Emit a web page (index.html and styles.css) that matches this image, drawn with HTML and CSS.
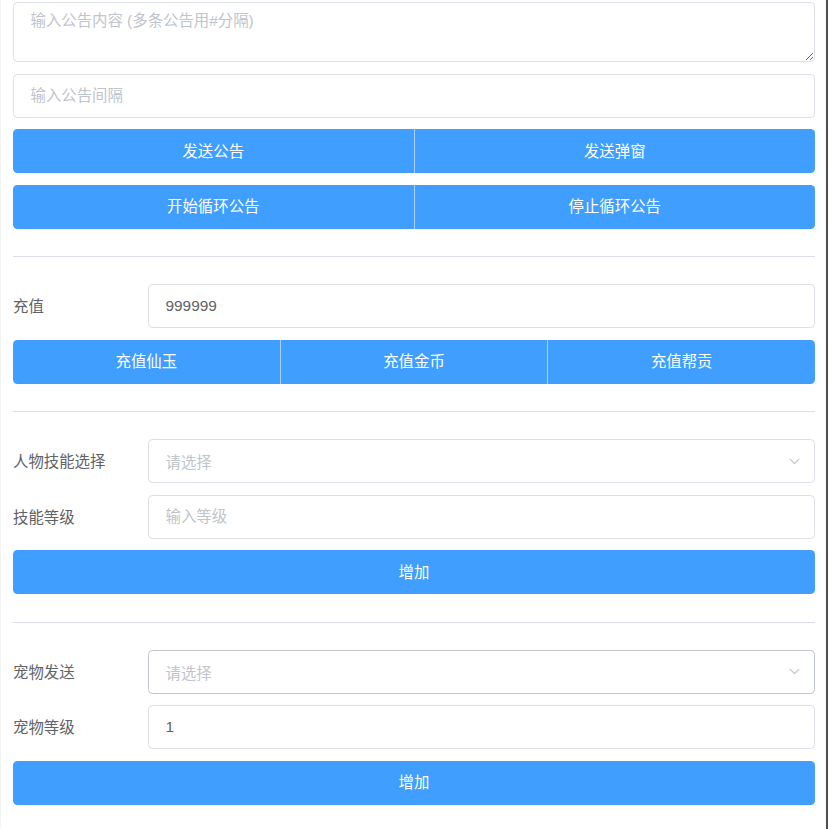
FILE: index.html
```html
<!DOCTYPE html>
<html lang="zh-CN">
<head>
<meta charset="utf-8">
<title>管理面板</title>
<link rel="stylesheet" href="styles.css">
</head>
<body>
<div class="page">
  <div class="section">
    <textarea class="textarea" placeholder="输入公告内容 (多条公告用#分隔)"></textarea>
    <input class="input" type="text" placeholder="输入公告间隔">
    <div class="btn-group">
      <button class="btn">发送公告</button>
      <button class="btn">发送弹窗</button>
    </div>
    <div class="btn-group">
      <button class="btn">开始循环公告</button>
      <button class="btn">停止循环公告</button>
    </div>
  </div>
  <hr class="divider">
  <div class="section">
    <div class="form-row">
      <label class="label">充值</label>
      <input class="input" type="text" value="999999">
    </div>
    <div class="btn-group">
      <button class="btn">充值仙玉</button>
      <button class="btn">充值金币</button>
      <button class="btn">充值帮贡</button>
    </div>
  </div>
  <hr class="divider">
  <div class="section">
    <div class="form-row">
      <label class="label">人物技能选择</label>
      <div class="select">
        <span class="select-placeholder">请选择</span>
        <svg class="chevron" width="11" height="7" viewBox="0 0 11 7"><path d="M0.8 0.8 L5.5 5.6 L10.2 0.8" fill="none" stroke="#C0C4CC" stroke-width="1.2"/></svg>
      </div>
    </div>
    <div class="form-row">
      <label class="label">技能等级</label>
      <input class="input" type="text" placeholder="输入等级">
    </div>
    <button class="btn btn-block">增加</button>
  </div>
  <hr class="divider">
  <div class="section">
    <div class="form-row">
      <label class="label">宠物发送</label>
      <div class="select select-hover">
        <span class="select-placeholder">请选择</span>
        <svg class="chevron" width="11" height="7" viewBox="0 0 11 7"><path d="M0.8 0.8 L5.5 5.6 L10.2 0.8" fill="none" stroke="#C0C4CC" stroke-width="1.2"/></svg>
      </div>
    </div>
    <div class="form-row">
      <label class="label">宠物等级</label>
      <input class="input" type="text" value="1">
    </div>
    <button class="btn btn-block">增加</button>
  </div>
</div>
</body>
</html>
```

FILE: styles.css
```css
* {
  box-sizing: border-box;
}

html, body {
  margin: 0;
  padding: 0;
  background: #ffffff;
}

body {
  font-family: "Liberation Sans", "Noto Sans CJK SC", sans-serif;
  font-size: 15.4px;
  color: #606266;
}

.page {
  width: 828px;
  min-height: 100vh;
  padding: 2px 11px 20px 12px;
  border-right: 2px solid #4d4d4d;
  border-left: 1px solid #f3f3f3;
}

.section {
  display: flex;
  flex-direction: column;
  gap: 11.5px;
}

.divider {
  border: 0;
  border-top: 1px solid #DCDFE6;
  margin: 27.5px 0 27px 0;
  height: 0;
}

.textarea {
  display: block;
  width: 100%;
  height: 60px;
  padding: 5.5px 16.5px;
  border: 1px solid #DCDFE6;
  border-radius: 4.4px;
  font-family: inherit;
  font-size: 15.4px;
  line-height: 1.5;
  color: #606266;
  resize: vertical;
  outline: none;
}

.input {
  display: block;
  width: 100%;
  height: 44px;
  padding: 0 16.5px;
  border: 1px solid #DCDFE6;
  border-radius: 4.4px;
  font-family: inherit;
  font-size: 15.4px;
  color: #606266;
  outline: none;
  background: #fff;
}

.textarea::placeholder,
.input::placeholder {
  color: #C0C4CC;
}

.btn-group {
  display: flex;
}

.btn {
  flex: 1 1 0;
  height: 44px;
  border: 0;
  background: #409EFF;
  color: #ffffff;
  font-family: inherit;
  font-size: 15.4px;
  padding: 0 0 3px 0;
  cursor: pointer;
}

.btn-group .btn {
  border-radius: 0;
}

.btn-group .btn + .btn {
  border-left: 1px solid rgba(255, 255, 255, 0.55);
}

.btn-group .btn:first-child {
  border-radius: 4.4px 0 0 4.4px;
}

.btn-group .btn:last-child {
  border-radius: 0 4.4px 4.4px 0;
}

.btn-block {
  width: 100%;
  flex: none;
  border-radius: 4.4px;
}

.form-row {
  display: flex;
  align-items: center;
  height: 44px;
}

.label {
  flex: 0 0 135px;
  font-size: 15.4px;
  color: #606266;
  line-height: 20px;
  padding-top: 2px;
}

.form-row .input,
.form-row .select {
  flex: 1 1 auto;
  width: auto;
}

.select {
  display: flex;
  align-items: center;
  justify-content: space-between;
  height: 44px;
  padding: 0 14px 0 16.5px;
  border: 1px solid #DCDFE6;
  border-radius: 4.4px;
  background: #fff;
}

.select-hover {
  border-color: #C0C4CC;
}

.select-placeholder {
  color: #C0C4CC;
}

.chevron {
  display: block;
}
```
